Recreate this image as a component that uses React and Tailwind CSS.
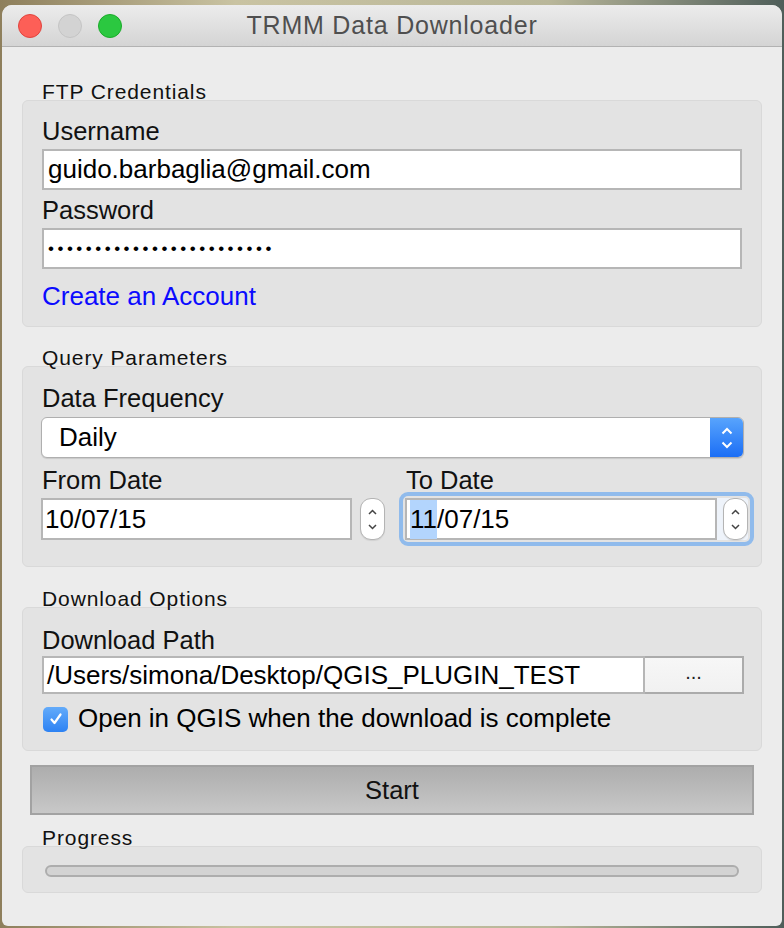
import React from 'react';

const font = { fontFamily: '"Liberation Sans", Arial, Helvetica, sans-serif' };

function GroupBox({ title, className, children }) {
  return (
    <div className={className}>
      <div className="pl-[20px] text-[21px] leading-[17px] tracking-[0.9px] text-[#111]">{title}</div>
      <div className="rounded-[6px] border border-[#d9d9d9] bg-[#e3e3e3] px-[19px]">{children}</div>
    </div>
  );
}

function Label({ children, className = '' }) {
  return <div className={`h-[30px] text-[25.5px] leading-[30px] text-[#111] ${className}`}>{children}</div>;
}

function Spinner() {
  return (
    <div className="flex h-[42px] w-[25px] shrink-0 flex-col items-center justify-center gap-[9px] rounded-[11px] border border-[#b4b4b4] bg-white shadow-[0_1px_1px_rgba(0,0,0,0.08)]">
      <svg width="9" height="6" viewBox="0 0 9 6" fill="none" stroke="#444" strokeWidth="1.5">
        <path d="M1 5l3.5-3.5L8 5" />
      </svg>
      <svg width="9" height="6" viewBox="0 0 9 6" fill="none" stroke="#444" strokeWidth="1.5">
        <path d="M1 1l3.5 3.5L8 1" />
      </svg>
    </div>
  );
}

export default function App() {
  return (
    <div className="h-[928px] w-[784px] overflow-hidden bg-[linear-gradient(90deg,#8e7f5c_0%,#c9c3a2_30%,#b9b79a_70%,#4f5e5a_100%)] pl-[2px] pt-[5px]" style={font}>
      <div className="flex h-[921px] w-[780px] flex-col overflow-hidden rounded-t-[10px] rounded-b-[6px] bg-[#ececec]">
        {/* Title bar */}
        <div className="relative flex h-[42px] shrink-0 items-center border-b border-[#b2b2b2] bg-[linear-gradient(#ececec,#d4d4d4)]">
          <div className="flex items-center gap-[16px] pl-[16px]">
            <span className="h-[24px] w-[24px] rounded-full border border-[#e0443e] bg-[#fd5f57]" />
            <span className="h-[24px] w-[24px] rounded-full border border-[#c4c4c4] bg-[#d3d3d3]" />
            <span className="h-[24px] w-[24px] rounded-full border border-[#1aab29] bg-[#2bc840]" />
          </div>
          <div className="flex-1 pr-[120px] text-center text-[25px] tracking-[0.8px] text-[#4f4f4f]">TRMM Data Downloader</div>
        </div>

        <div className="px-[20px] pt-[36px]">
          {/* FTP Credentials */}
          <GroupBox title="FTP Credentials">
            <div className="pt-[15px] pb-[15px]">
              <Label>Username</Label>
              <div className="mt-[3px] flex h-[41px] items-center border-2 border-[#b6b6b6] bg-white pl-[4px] text-[26px] text-black">
                guido.barbaglia@gmail.com
              </div>
              <Label className="mt-[5px]">Password</Label>
              <div className="mt-[3px] flex h-[41px] items-center border-2 border-[#b6b6b6] bg-white pl-[4px] text-[17px] tracking-[3.5px] text-black">
                {'•'.repeat(24)}
              </div>
              <div className="mt-[12px] h-[30px] text-[26px] leading-[30px] text-[#0b0bff]">Create an Account</div>
            </div>
          </GroupBox>

          {/* Query Parameters */}
          <GroupBox title="Query Parameters" className="mt-[22px]">
            <div className="pt-[16px] pb-[26px]">
              <Label>Data Frequency</Label>
              <div className="-ml-[1px] -mr-[2px] mt-[4px] flex h-[41px] overflow-hidden rounded-[6px] border border-[#afafaf] bg-white shadow-[0_1px_1px_rgba(0,0,0,0.12)]">
                <div className="flex flex-1 items-center pl-[17px] text-[26px] text-black">Daily</div>
                <div className="flex w-[33px] flex-col items-center justify-center gap-[6px] bg-[linear-gradient(#58a4fd,#1b6ef5)]">
                  <svg width="12" height="8" viewBox="0 0 12 8" fill="none" stroke="white" strokeWidth="2">
                    <path d="M1.5 6.5L6 2l4.5 4.5" />
                  </svg>
                  <svg width="12" height="8" viewBox="0 0 12 8" fill="none" stroke="white" strokeWidth="2">
                    <path d="M1.5 1.5L6 6l4.5-4.5" />
                  </svg>
                </div>
              </div>
              <div className="-ml-[1px] mt-[7px] flex">
                <div className="w-[344px]">
                  <Label className="pl-[1px]">From Date</Label>
                  <div className="mt-[3px] flex gap-[8px]">
                    <div className="flex h-[42px] w-[312px] items-center border-2 border-[#b6b6b6] bg-white pl-[2px] text-[26px] text-black">
                      10/07/15
                    </div>
                    <Spinner />
                  </div>
                </div>
                <div className="ml-[20px]">
                  <Label className="pl-[1px]">To Date</Label>
                  <div className="mt-[3px] flex gap-[6px] rounded-[3px] bg-[#eef3fa] outline-4 outline-offset-2 outline-[#90bbec]">
                    <div className="flex h-[42px] w-[312px] items-center border-2 border-[#b6b6b6] bg-white pl-[3px] text-[26px] text-black">
                      <span className="bg-[#b3d5fd]">11</span>/07/15
                    </div>
                    <Spinner />
                  </div>
                </div>
              </div>
            </div>
          </GroupBox>

          {/* Download Options */}
          <GroupBox title="Download Options" className="mt-[23px]">
            <div className="pt-[17px] pb-[17px]">
              <Label>Download Path</Label>
              <div className="-mr-[2px] mt-[1px] flex h-[38px]">
                <div className="flex flex-1 items-center border-2 border-[#b6b6b6] bg-white pl-[3px] text-[26px] text-black">
                  /Users/simona/Desktop/QGIS_PLUGIN_TEST
                </div>
                <div className="flex w-[99px] items-center justify-center border-2 border-l-0 border-[#ababab] bg-[linear-gradient(#f7f7f7,#f1f1f1)] pb-[6px] text-[20px] text-[#222]">
                  ...
                </div>
              </div>
              <div className="mt-[9px] flex h-[30px] items-center gap-[10px]">
                <div className="ml-[1px] mt-[2px] flex h-[25px] w-[25px] items-center justify-center rounded-[5px] bg-[linear-gradient(#63abfa,#2d82f3)]">
                  <svg width="14" height="14" viewBox="0 0 14 14" fill="none" stroke="white" strokeWidth="2.2" strokeLinecap="round" strokeLinejoin="round">
                    <path d="M2.5 7.5L5.5 11L11.5 2.5" />
                  </svg>
                </div>
                <div className="text-[26px] leading-[30px] text-black">Open in QGIS when the download is complete</div>
              </div>
            </div>
          </GroupBox>

          {/* Start */}
          <div className="mx-[8px] mt-[14px] flex h-[50px] items-center justify-center border-2 border-[#a2a2a2] bg-[linear-gradient(#adadad,#c8c8c8)] text-[25.5px] text-[#111]">
            Start
          </div>

          {/* Progress */}
          <GroupBox title="Progress" className="mt-[14px]">
            <div className="pt-[18px] pb-[15px]">
              <div className="mx-[3px] h-[12px] rounded-full border-2 border-[#adadad] bg-[#d3d3d3]" />
            </div>
          </GroupBox>
        </div>
      </div>
    </div>
  );
}
